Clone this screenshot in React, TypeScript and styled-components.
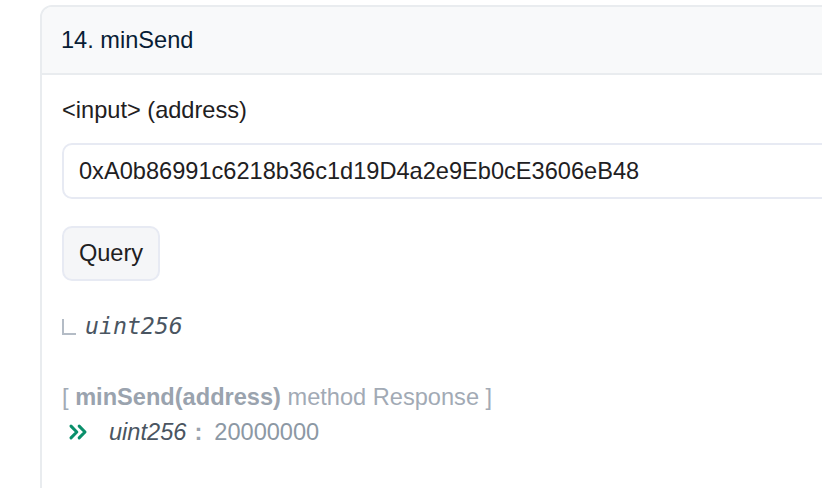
import styled, { createGlobalStyle } from "styled-components";
import { ChevronsRight } from "lucide-react";

const GlobalStyle = createGlobalStyle`
    html, body {
        margin: 0;
        padding: 0;
        background: #ffffff;
        overflow: hidden;
    }
    body {
        font-family: "Liberation Sans", Arial, sans-serif;
        color: #1e2022;
    }
`

const Page = styled.div`
    padding: 5px 0 0 40px;
    width: 822px;
    height: 488px;
    box-sizing: border-box;
    overflow: hidden;
`

const Card = styled.div`
    width: 900px;
    min-height: 520px;
    border: 2px solid #e9ecef;
    border-radius: 12px 12px 0 0;
    background: #ffffff;
    box-sizing: border-box;
`

const CardHeader = styled.div`
    height: 66px;
    display: flex;
    align-items: center;
    padding-left: 19px;
    background: #f8f9fa;
    border-bottom: 2px solid #e9ecef;
    border-radius: 10px 10px 0 0;
    font-size: 23.6px;
    color: #081d35;
`

const CardBody = styled.div`
    display: flex;
    flex-direction: column;
    align-items: flex-start;
    padding: 21px 0 0 20px;
`

const Label = styled.div`
    font-size: 23.6px;
    line-height: 28px;
    color: #1e2022;
`

const AddressInput = styled.div`
    margin-top: 19px;
    width: 820px;
    height: 56px;
    box-sizing: border-box;
    display: flex;
    align-items: center;
    padding-left: 15px;
    border: 2px solid #e7eaf3;
    border-radius: 10px;
    font-size: 23.6px;
    color: #1e2022;
`

const QueryButton = styled.button`
    margin-top: 27px;
    height: 55px;
    width: 98px;
    box-sizing: border-box;
    border: 2px solid #e7eaf3;
    border-radius: 10px;
    background: #f5f6f8;
    font-family: "Liberation Sans", Arial, sans-serif;
    font-size: 23.6px;
    color: #1e2022;
    padding: 0;
`

const TypeRow = styled.div`
    margin-top: 30px;
    display: flex;
    align-items: center;
    height: 28px;
    gap: 9px;
`

const Corner = styled.span`
    width: 12px;
    height: 14px;
    margin-top: 4px;
    border-left: 2.5px solid #b4bcc6;
    border-bottom: 2.5px solid #b4bcc6;
`

const MonoType = styled.span`
    font-family: "DejaVu Sans Mono", "Liberation Mono", monospace;
    font-style: italic;
    font-size: 23.2px;
    color: #4a5561;
`

const ResponseTitle = styled.div`
    margin-top: 44px;
    font-size: 23.6px;
    line-height: 28px;
    color: #a2aab5;

    & b {
        color: #9aa3ae;
    }
`

const ResultRow = styled.div`
    margin-top: 7px;
    display: flex;
    align-items: center;
    height: 28px;
    font-size: 23.6px;
    padding-left: 2px;
`

const Chevrons = styled(ChevronsRight)`
    color: #0a8f6b;
    margin-right: 17px;
`

const ResultType = styled.i`
    color: #4a5561;
`

const Colon = styled.b`
    color: #9aa3ae;
    margin: 0 12px 0 8px;
`

const ResultValue = styled.span`
    color: #8c98a4;
`

function App() {
    return (
        <>
            <GlobalStyle />
            <Page>
                <Card>
                    <CardHeader>14. minSend</CardHeader>
                    <CardBody>
                        <Label>&lt;input&gt; (address)</Label>
                        <AddressInput>0xA0b86991c6218b36c1d19D4a2e9Eb0cE3606eB48</AddressInput>
                        <QueryButton>Query</QueryButton>
                        <TypeRow>
                            <Corner />
                            <MonoType>uint256</MonoType>
                        </TypeRow>
                        <ResponseTitle>
                            [ <b>minSend(address)</b> method Response ]
                        </ResponseTitle>
                        <ResultRow>
                            <Chevrons size={28} strokeWidth={2.6} />
                            <ResultType>uint256</ResultType>
                            <Colon>:</Colon>
                            <ResultValue>20000000</ResultValue>
                        </ResultRow>
                    </CardBody>
                </Card>
            </Page>
        </>
    );
}

export default App;
